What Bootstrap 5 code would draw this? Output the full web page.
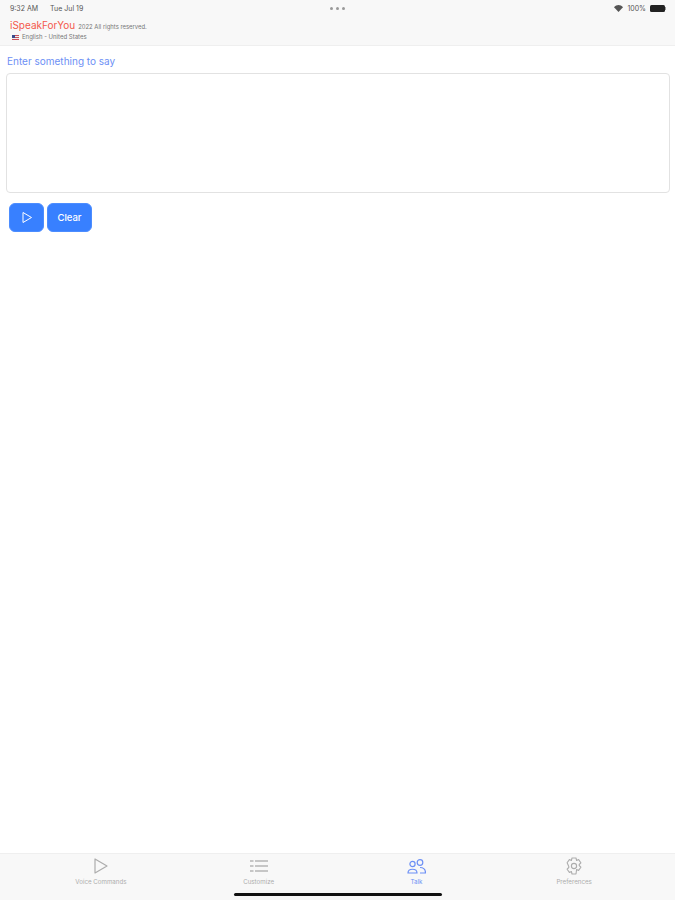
<!DOCTYPE html>
<html lang="en">
<head>
    <meta charset="UTF-8">
    <meta name="viewport" content="width=device-width, initial-scale=1.0">
    <title>iSpeakForYou</title>
    <link href="https://cdn.jsdelivr.net/npm/bootstrap@5.3.0/dist/css/bootstrap.min.css" rel="stylesheet">
    <style>
        html, body { height: 100%; }
        body { font-family: "Inter", "Liberation Sans", sans-serif; overflow: hidden; }
        .app-shell { height: 900px; }
        .top-head { height: 46px; background: #f8f8f8; border-bottom: 1px solid #efefef; padding: 4px 9px 0 10px; }
        .status-row { height: 9px; font-size: 7px; line-height: 9px; color: #555; }
        .status-time { margin-right: 12px; }
        .status-dots { margin-left: 247px; gap: 3px; }
        .status-dots i { width: 3px; height: 3px; border-radius: 50%; background: #999; display: block; }
        .batt-box { width: 15px; height: 7px; border-radius: 1.5px; background: #222; }
        .batt-tip { width: 1px; height: 3px; background: #999; }
        .brand-row { margin-top: 7px; line-height: 11px; height: 11px; display: flex; align-items: baseline; gap: 3px; }
        .brand-name { font-size: 10px; color: #f4594c; }
        .brand-copy { font-size: 5.9px; color: #777; }
        .lang-row { font-size: 6px; line-height: 8px; color: #777; padding-left: 2px; margin-top: 2px; }
        .flag-mini { width: 7px; height: 5px; margin-right: 3px; }
        .say-label { font-size: 10px; line-height: 13px; color: #6d90f5; margin: 9px 0 5px 7px; }
        .say-box { display: block; width: 664px; height: 120px; margin-left: 6px; border: 1px solid #e2e2e2; border-radius: 4px; resize: none; outline: none; }
        .btn-row { padding: 10px 0 0 9px; gap: 3px; }
        .blue-btn { height: 29px; background: #3880ff; border: 1px solid #4c8dff; border-radius: 6px; color: #fff; font-size: 9.5px; font-weight: 500; padding: 2px 0 0; }
        .btn-play { width: 35px; padding-top: 0; }
        .btn-clear { width: 45px; }
        .tab-strip { height: 47px; background: #f8f8f8; border-top: 1px solid #efefef; padding: 0 22px; position: relative; }
        .tab-cell { width: 158px; padding-top: 3px; font-size: 6.2px; line-height: 8px; color: #adadad; }
        .tab-cell svg { display: block; margin-bottom: 3px; }
        .tab-on { color: #6d90f5; }
        .home-bar { position: absolute; left: 234px; bottom: 4px; width: 208px; height: 3px; border-radius: 2px; background: #111; }
    </style>
</head>
<body>
    <div class="app-shell d-flex flex-column">
        <div class="top-head">
            <div class="status-row d-flex align-items-center">
                <span class="status-time">9:32 AM</span>
                <span>Tue Jul 19</span>
                <span class="status-dots d-flex">
                    <i></i><i></i><i></i>
                </span>
                <span class="ms-auto d-flex align-items-center gap-1">
                    <svg width="9" height="7" viewBox="0 0 9 7"><path d="M4.5 7 0 2.2C2.6-.7 6.4-.7 9 2.2z" fill="#555"/></svg>
                    <span>100%</span>
                    <span class="d-flex align-items-center">
                        <span class="batt-box"></span><span class="batt-tip"></span>
                    </span>
                </span>
            </div>
            <div class="brand-row">
                <span class="brand-name">iSpeakForYou</span>
                <span class="brand-copy">2022 All rights reserved.</span>
            </div>
            <div class="lang-row d-flex align-items-center">
                <svg class="flag-mini" viewBox="0 0 7 5"><rect width="7" height="5" fill="#c9505a"/><rect y="1" width="7" height="1" fill="#eee"/><rect y="3" width="7" height="1" fill="#eee"/><rect width="3" height="3" fill="#3a4a8c"/></svg>
                <span>English - United States</span>
            </div>
        </div>

        <div class="flex-grow-1">
            <div class="say-label">Enter something to say</div>
            <textarea class="say-box"></textarea>
            <div class="btn-row d-flex">
                <button class="btn blue-btn btn-play d-flex align-items-center justify-content-center" type="button" aria-label="Play">
                    <svg width="12" height="13" viewBox="0 0 12 13"><path d="M2 1.5v10l8.5-5z" fill="none" stroke="#fff" stroke-width="1" stroke-linejoin="round"/></svg>
                </button>
                <button class="btn blue-btn btn-clear" type="button">Clear</button>
            </div>
        </div>

        <div class="tab-strip d-flex">
            <div class="tab-cell d-flex flex-column align-items-center">
                <svg width="16" height="18" viewBox="0 0 16 18"><path d="M2 2v14l12-7z" fill="none" stroke="#adadad" stroke-width="1.2" stroke-linejoin="round"/></svg>
                <span>Voice Commands</span>
            </div>
            <div class="tab-cell d-flex flex-column align-items-center">
                <svg width="18" height="18" viewBox="0 0 18 18"><path d="M5 4h13M5 9h13M5 14h13M0 4h3.5M0 9h3.5M0 14h3.5" fill="none" stroke="#b5b5b5" stroke-width="1.4"/></svg>
                <span>Customize</span>
            </div>
            <div class="tab-cell tab-on d-flex flex-column align-items-center">
                <svg width="19" height="18" viewBox="0 0 19 18"><g fill="none" stroke="#6d90f5" stroke-width="1.2"><circle cx="5.5" cy="7" r="2.6"/><circle cx="13" cy="5.5" r="2.8"/><path d="M1 16c0-5 9-5 9 0zM13 10.500c3 0 5.500 1.500 5.500 5.500h-5.500"/></g></svg>
                <span>Talk</span>
            </div>
            <div class="tab-cell d-flex flex-column align-items-center">
                <svg width="18" height="18" viewBox="0 0 18 18"><g fill="none" stroke="#adadad" stroke-width="1.1" stroke-linejoin="round"><path d="M7 1h4l.6 2.500 2-.9 2.300 3.200-1.700 1.700v1l1.700 1.700-2.300 3.200-2-.9L11 17H7l-.6-2.500-2 .9-2.300-3.200 1.700-1.700v-1L2.100 5.800l2.300-3.200 2 .9z"/><circle cx="9" cy="9" r="2.600"/></g></svg>
                <span>Preferences</span>
            </div>
            <div class="home-bar"></div>
        </div>
    </div>
    <script src="https://cdn.jsdelivr.net/npm/bootstrap@5.3.0/dist/js/bootstrap.bundle.min.js"></script>
</body>
</html>
